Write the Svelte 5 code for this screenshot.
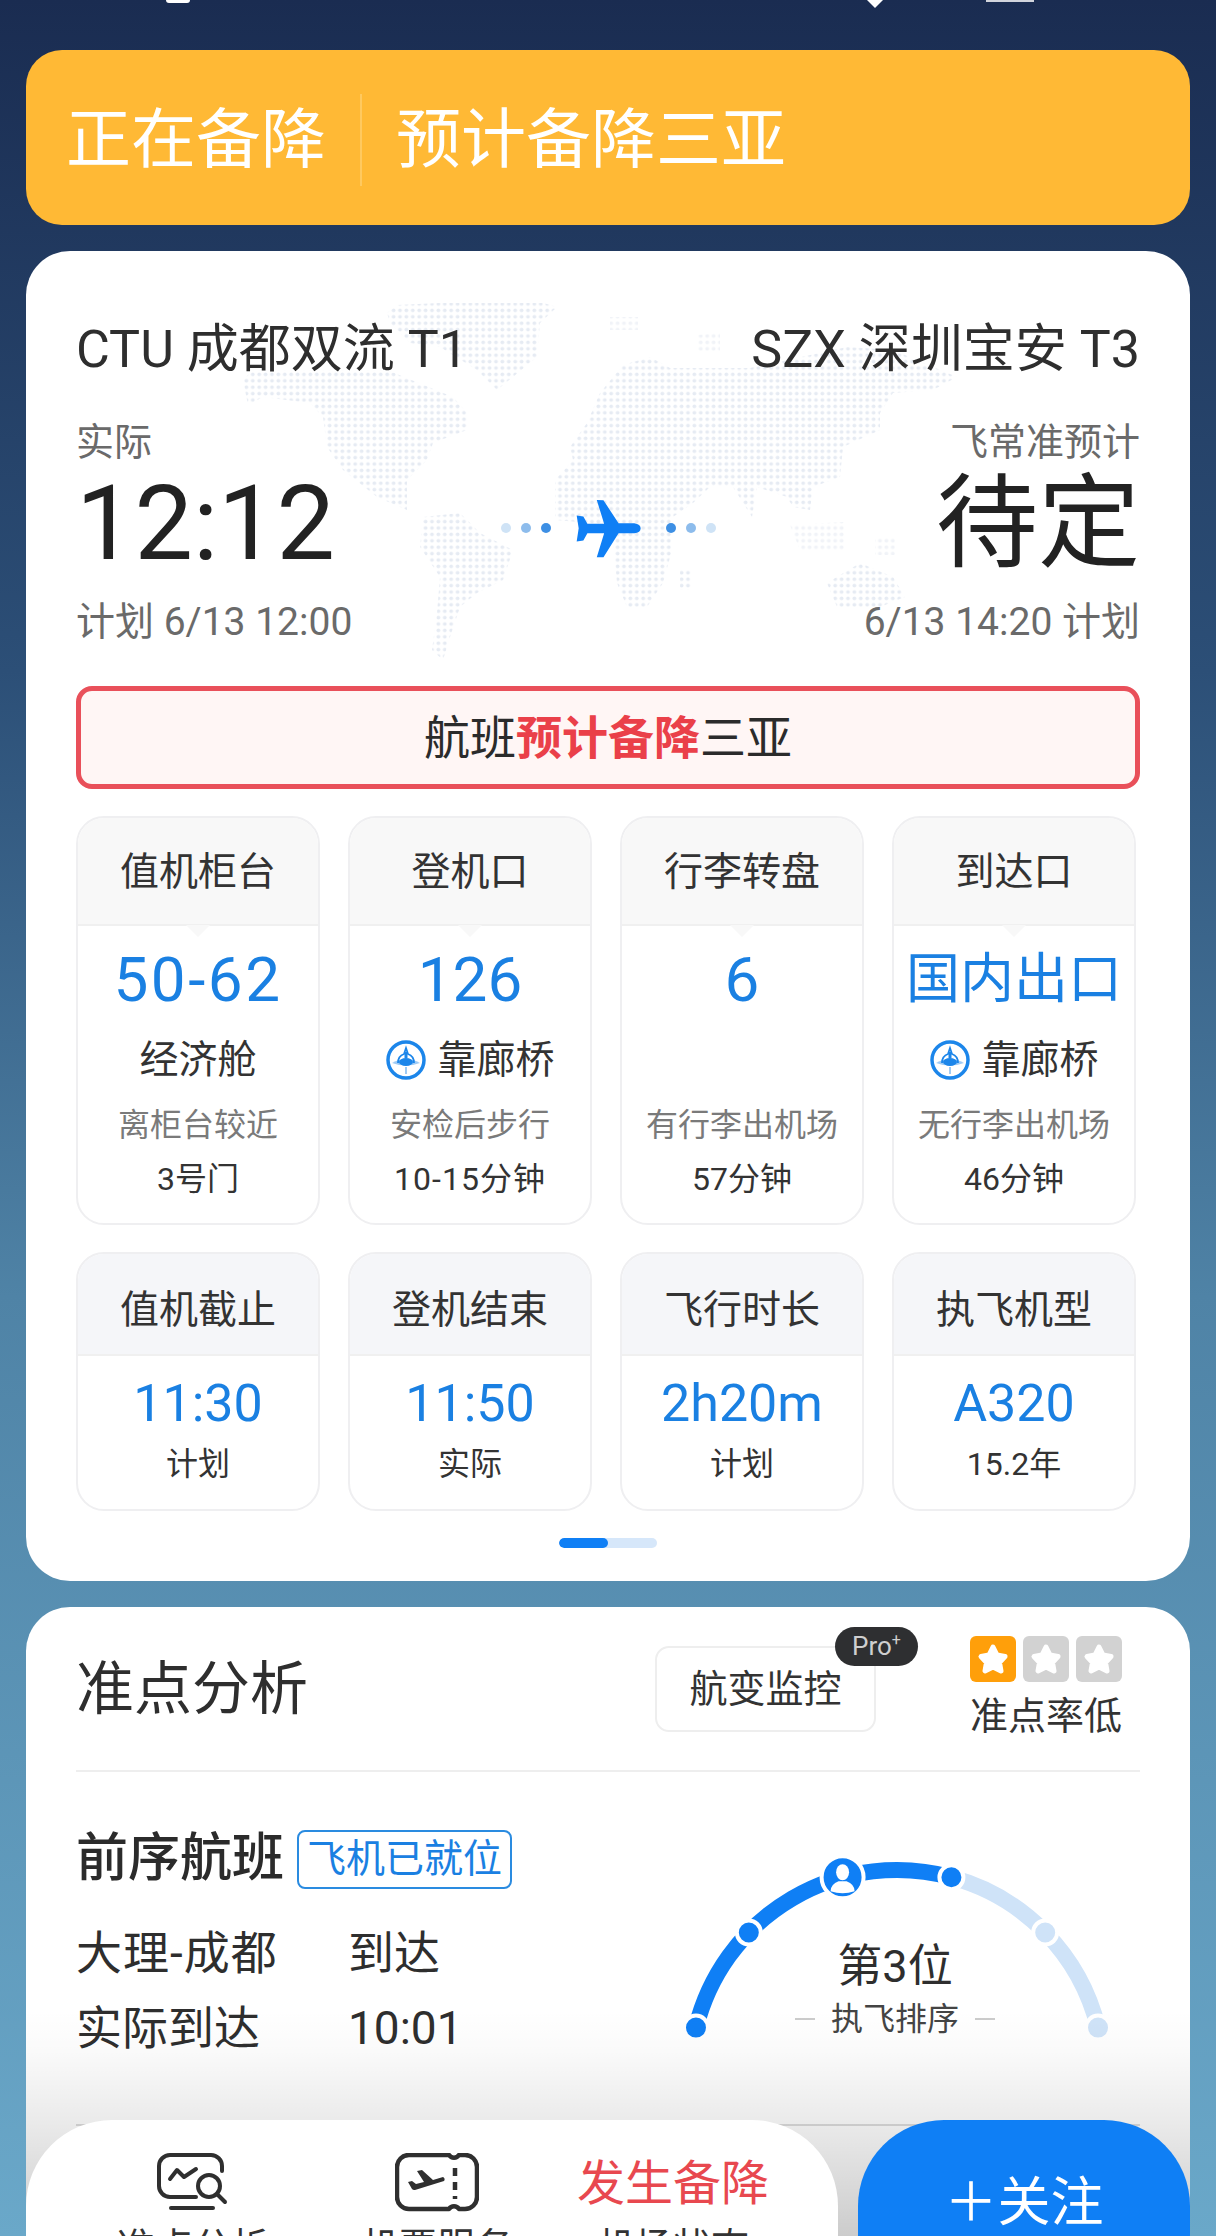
<script>
  const gates = [
    { title: '值机柜台', value: '50-62', wide: true, label: '经济舱', sub: '离柜台较近', note: '3号门' },
    { title: '登机口', value: '126', label: '靠廊桥', bridge: true, sub: '安检后步行', note: '10-15分钟', wideNote: true },
    { title: '行李转盘', value: '6', label: '', sub: '有行李出机场', note: '57分钟' },
    { title: '到达口', value: '国内出口', small: true, label: '靠廊桥', bridge: true, sub: '无行李出机场', note: '46分钟' }
  ];
  const times = [
    { title: '值机截止', value: '11:30', note: '计划' },
    { title: '登机结束', value: '11:50', note: '实际' },
    { title: '飞行时长', value: '2h20m', note: '计划' },
    { title: '执飞机型', value: 'A320', note: '15.2年' }
  ];
  const continents = [
    '243,380 253,370 387,370 453,397 467,413 467,430 433,443 427,460 407,480 407,510 377,497 343,470 327,447 323,417 310,403 263,397 248,405',
    '387,313 397,305 460,302 540,302 557,307 540,323 537,357 497,390 477,370 440,347 410,343 390,323',
    '423,517 460,513 480,533 513,550 503,580 477,593 460,607 450,637 443,660 432,650 437,613 440,577 420,547',
    '600,393 623,365 650,357 670,368 750,368 847,347 893,350 957,377 933,390 893,393 880,413 880,430 843,447 840,477 813,487 810,510 793,507 787,497 757,487 752,517 733,487 710,487 693,503 673,517 672,550 663,583 647,607 627,607 617,583 613,540 590,523 555,520 555,480 573,460 570,447 587,423',
    '680,570 692,570 692,590 680,590',
    '827,583 860,563 893,577 905,597 880,607 837,607'
  ];
  // scattered islands, drawn fainter
  const islands = [
    '610,317 638,317 638,330 610,330',
    '697,335 720,333 720,353 697,353',
    '790,525 845,522 845,550 800,550',
    '875,538 895,538 895,555 875,555'
  ];

  // gauge: six stops, evenly spaced along the arc
  const cx = 220, cy = 227, r = 207;
  const stops = [0, 1, 2, 3, 4, 5].map((i) => {
    const a = ((13.8 + 30.48 * i) * Math.PI) / 180;
    return { x: cx - r * Math.cos(a), y: cy - r * Math.sin(a), i };
  });
  const arc = (a, b) => `M${a.x} ${a.y} A${r} ${r} 0 0 1 ${b.x} ${b.y}`;
</script>

<div class="page">
  <div class="status-bits">
    <span class="bit-round"></span>
    <span class="bit-diamond"></span>
    <span class="bit-rect"></span>
  </div>

  <div class="banner">
    <span class="banner-state">正在备降</span>
    <span class="banner-msg">预计备降三亚</span>
  </div>

  <section class="card flight">
    <svg class="map" viewBox="240 303 730 360" width="730" height="360" aria-hidden="true">
      <defs>
        <pattern id="dots" width="6.4" height="6.4" patternUnits="userSpaceOnUse">
          <circle cx="3.2" cy="3.2" r="1.9" fill="#e6ebf3" />
        </pattern>
      </defs>
      {#each continents as pts}
        <polygon points={pts} fill="url(#dots)" />
      {/each}
      <g opacity="0.55">
        {#each islands as pts}
          <polygon points={pts} fill="url(#dots)" />
        {/each}
      </g>
    </svg>

    <div class="route">
      <span>CTU 成都双流 T1</span>
      <span>SZX 深圳宝安 T3</span>
    </div>

    <div class="schedule">
      <div class="side">
        <div class="kind">实际</div>
        <div class="clock">12:12</div>
        <div class="plan">计划 6/13 12:00</div>
      </div>
      <div class="path">
        <i class="dot d1"></i><i class="dot d2"></i><i class="dot d3"></i>
        <svg class="plane" viewBox="285 80 200 182" width="67" height="61">
          <path fill="#0f7ff5" d="M290 132 L310 135 L322 157 H372 L350 86 L370 87 L415 155 H462 Q481 158 481 170 Q481 183 462 185 H415 L370 257 L350 257 L372 185 H322 L310 207 L290 210 L296 170 Z" />
        </svg>
        <i class="dot d3"></i><i class="dot d2"></i><i class="dot d1"></i>
      </div>
      <div class="side right">
        <div class="kind">飞常准预计</div>
        <div class="clock pending">待定</div>
        <div class="plan">6/13 14:20 计划</div>
      </div>
    </div>

    <div class="alert">航班<b>预计备降</b>三亚</div>

    <div class="tiles first">
      {#each gates as t}
        <div class="tile">
          <div class="tile-head notch">{t.title}</div>
          <div class="value" class:small={t.small} class:wide={t.wide}>{t.value}</div>
          <div class="label">
            {#if t.bridge}
              <svg viewBox="0 0 42 42" width="42" height="42">
                <circle cx="21" cy="21" r="18" fill="#fff" stroke="#1c86ea" stroke-width="3.5" />
                <path d="M7 24 Q21 16 35 24 Q21 29 7 24 Z" fill="#9fcbf5" />
                <path d="M13 24 Q13 17 19 15 L21 9 L23 15 Q29 17 29 24" fill="none" stroke="#1c86ea" stroke-width="1.8" />
                <ellipse cx="21" cy="23" rx="7" ry="4" fill="#1c86ea" />
                <path d="M21 13 V19" stroke="#1c86ea" stroke-width="3" />
                <path d="M21 28 V35" stroke="#9fcbf5" stroke-width="2" />
              </svg>
            {/if}
            {t.label}
          </div>
          <div class="sub">{t.sub}</div>
          <div class="note" class:wide-note={t.wideNote}>{t.note}</div>
        </div>
      {/each}
    </div>

    <div class="tiles second">
      {#each times as t}
        <div class="tile">
          <div class="tile-head cool">{t.title}</div>
          <div class="value thin">{t.value}</div>
          <div class="note tight">{t.note}</div>
        </div>
      {/each}
    </div>

    <div class="pager"><span></span></div>
  </section>

  <section class="card punctual">
    <div class="head">
      <h2>准点分析</h2>
      <div class="monitor">
        航变监控
        <span class="pro">Pro<sup>+</sup></span>
      </div>
      <div class="rating">
        <div class="stars">
          {#each [true, false, false] as on}
            <span class="star" class:on>
              <svg viewBox="0 0 46 46" width="46" height="46">
                <path fill="#fff" stroke="#fff" stroke-width="5" stroke-linejoin="round" d="M23 11 L27 19 L35 20.5 L29.5 26.5 L31 35 L23 31 L15 35 L16.5 26.5 L11 20.5 L19 19 Z" />
              </svg>
            </span>
          {/each}
        </div>
        <div class="rating-text">准点率低</div>
      </div>
    </div>

    <div class="body">
      <div class="prev">
        <div class="prev-title">
          <h3>前序航班</h3>
          <span class="tag">飞机已就位</span>
        </div>
        <div class="row first-row"><span class="wide-row">大理-成都</span><span>到达</span></div>
        <div class="row"><span>实际到达</span><span>10:01</span></div>
      </div>

      <div class="gauge">
        <svg viewBox="0 0 440 200" width="440" height="200">
          <path d={arc(stops[3], stops[5])} fill="none" stroke="#cfe3f8" stroke-width="16" />
          <path d={arc(stops[0], stops[3])} fill="none" stroke="#0f7ff5" stroke-width="16" />
          {#each stops as s}
            {#if s.i === 2}
              <circle cx={s.x} cy={s.y} r="21" fill="#0f7ff5" stroke="#fff" stroke-width="4" />
              <ellipse cx={s.x} cy={s.y - 5} rx="6.5" ry="8" fill="#fff" />
              <path d="M{s.x - 12} {s.y + 14} Q{s.x - 12} {s.y + 7} {s.x - 4} {s.y + 4} H{s.x + 4} Q{s.x + 12} {s.y + 7} {s.x + 12} {s.y + 14} Q{s.x} {s.y + 18} {s.x - 12} {s.y + 14} Z" fill="#fff" />
            {:else}
              <circle cx={s.x} cy={s.y} r="12" fill={s.i <= 3 ? '#0f7ff5' : '#cfe3f8'} stroke="#fff" stroke-width="4" />
            {/if}
          {/each}
        </svg>
        <div class="rank">第3位</div>
        <div class="rank-sub"><i></i>执飞排序<i></i></div>
      </div>
    </div>

    <div class="next-line"></div>
  </section>

  <div class="dock">
    <nav class="tabs">
      <div class="tab">
        <svg viewBox="0 0 72 60" width="72" height="60" fill="none" stroke="#2f2f2f" stroke-width="4" stroke-linecap="round" stroke-linejoin="round">
          <path d="M65 18 V13 a11 11 0 0 0 -11 -11 H13 a11 11 0 0 0 -11 11 V33 a11 11 0 0 0 11 11 H39" />
          <path d="M13 26 L20 17 L27 24 L39 16" />
          <circle cx="52" cy="33" r="11" />
          <path d="M60 41 L68 49" />
          <path d="M14 55 H56" />
        </svg>
        <span>准点分析</span>
      </div>
      <div class="tab middle">
        <svg viewBox="0 0 84 60" width="84" height="60" fill="none" stroke="#2f2f2f" stroke-width="4.5" stroke-linejoin="round">
          <path d="M14 2 H54 a6 6 0 0 0 10 0 H70 a12 12 0 0 1 12 12 V44 a12 12 0 0 1 -12 12 H64 a6 6 0 0 0 -10 0 H14 a12 12 0 0 1 -12 -12 V14 a12 12 0 0 1 12 -12 Z" />
          <path d="M60 15 V46" stroke-dasharray="8 6" />
          <path stroke="none" fill="#2f2f2f" d="M13 29 L17 28 L21 31 L29 29 L22 18 L27 17 L38 27 L48 24 A2.5 2.5 0 0 1 49 28 L20 37 A3 3 0 0 1 17 36 Z" />
        </svg>
        <span>机票服务</span>
      </div>
      <div class="tab alert-tab">
        <strong>发生备降</strong>
        <span>机场状态</span>
      </div>
    </nav>
    <button class="follow">＋关注</button>
  </div>
</div>

<style>
  :global(body) {
    margin: 0;
  }

  .page {
    position: relative;
    box-sizing: border-box;
    width: 1216px;
    height: 2236px;
    overflow: hidden;
    padding: 50px 26px 0;
    background: linear-gradient(180deg, #1a2c51 0%, #2c4f77 30%, #4f83a6 58%, #6aa8c9 100%);
    font-family: Roboto, "Noto Sans CJK SC", sans-serif;
    color: #2b2b2b;
  }

  .status-bits span {
    position: absolute;
    top: 0;
    background: #fff;
  }
  .bit-round {
    left: 166px;
    width: 24px;
    height: 3px;
    border-radius: 0 0 12px 12px;
  }
  .bit-diamond {
    left: 867px;
    width: 16px;
    height: 8px;
    clip-path: polygon(0 0, 100% 0, 50% 100%);
  }
  .bit-rect {
    left: 986px;
    width: 48px;
    height: 2px;
    opacity: 0.8;
  }

  .banner {
    box-sizing: border-box;
    height: 175px;
    display: flex;
    align-items: center;
    padding: 4px 0 0 40px;
    background: #ffb935;
    border-radius: 36px;
    color: #fff;
    font-size: 65px;
    line-height: 80px;
  }
  .banner-state {
    padding-right: 36px;
    position: relative;
  }
  .banner-state::after {
    content: '';
    position: absolute;
    right: 0;
    top: -6px;
    bottom: -6px;
    width: 2px;
    background: #ffc95f;
  }
  .banner-msg {
    padding-left: 34px;
  }

  .card {
    position: relative;
    background: #fff;
    border-radius: 44px;
  }

  .flight {
    box-sizing: border-box;
    height: 1330px;
    margin-top: 26px;
    padding: 69px 50px 0;
  }

  .map {
    position: absolute;
    left: 214px;
    top: 52px;
  }

  .route {
    position: relative;
    display: flex;
    justify-content: space-between;
    font-size: 52px;
    line-height: 60px;
    color: #2e2e2e;
  }

  .schedule {
    position: relative;
    display: grid;
    grid-template-columns: 1fr auto 1fr;
    align-items: center;
    margin-top: 38px;
  }
  .side.right {
    text-align: right;
  }
  .kind {
    font-size: 38px;
    line-height: 48px;
    color: #6a6a6a;
  }
  .clock {
    margin-top: 3px;
    font-size: 104px;
    line-height: 110px;
    color: #222;
  }
  .clock.pending {
    font-size: 102px;
  }
  .plan {
    margin-top: 19px;
    font-size: 39px;
    line-height: 48px;
    color: #6a6a6a;
  }

  .path {
    display: flex;
    align-items: center;
    gap: 10px;
    padding-bottom: 8px;
  }
  .plane {
    margin: 0 14px;
  }
  .dot {
    width: 10px;
    height: 10px;
    border-radius: 50%;
  }
  .d1 { background: #cfe3f6; }
  .d2 { background: #8dbcec; }
  .d3 { background: #3d8fe4; }

  .alert {
    position: relative;
    box-sizing: border-box;
    height: 103px;
    margin-top: 40px;
    border: 5px solid #e9505a;
    border-radius: 16px;
    background: #fff6f5;
    text-align: center;
    font-size: 46px;
    line-height: 95px;
    color: #2b2b2b;
  }
  .alert b {
    color: #ea4049;
    font-weight: 700;
  }

  .tiles {
    display: grid;
    grid-template-columns: repeat(4, 244px);
    gap: 28px;
    margin-top: 27px;
  }
  .tile {
    box-sizing: border-box;
    border: 2px solid #efeff1;
    border-radius: 28px;
    overflow: hidden;
    text-align: center;
    background: #fff;
  }
  .first .tile {
    height: 409px;
  }
  .second .tile {
    height: 259px;
  }
  .tile-head {
    position: relative;
    box-sizing: border-box;
    height: 108px;
    line-height: 108px;
    font-size: 39px;
    background: #f8f8f8;
    border-bottom: 2px solid #f0f0f0;
    color: #333;
  }
  .tile-head.cool {
    height: 102px;
    line-height: 112px;
    background: #f5f6f9;
  }
  .notch::after {
    content: '';
    position: absolute;
    left: 50%;
    bottom: -13px;
    width: 24px;
    height: 12px;
    margin-left: -12px;
    background: #f8f8f8;
    clip-path: polygon(0 0, 100% 0, 50% 100%);
  }

  .value {
    margin-top: 19px;
    font-size: 62px;
    line-height: 70px;
    color: #1a80e2;
  }
  .value.wide {
    letter-spacing: 2.5px;
  }
  .value.small {
    font-size: 54px;
  }
  .value.thin {
    margin-top: 18px;
    font-size: 52px;
    line-height: 60px;
  }
  .label {
    display: flex;
    align-items: center;
    justify-content: center;
    gap: 10px;
    height: 48px;
    margin-top: 21px;
    font-size: 39px;
    line-height: 48px;
    color: #333;
  }
  .sub {
    margin-top: 19px;
    font-size: 32px;
    line-height: 44px;
    color: #7a7a7a;
  }
  .note {
    margin-top: 10px;
    font-size: 32px;
    line-height: 44px;
    color: #333;
  }
  .note.wide-note {
    letter-spacing: 1px;
  }
  .note.tight {
    margin-top: 8px;
  }

  .pager {
    width: 98px;
    height: 10px;
    margin: 27px auto 0;
    border-radius: 5px;
    background: #d6e7fa;
    overflow: hidden;
  }
  .pager span {
    display: block;
    width: 49px;
    height: 100%;
    border-radius: 5px;
    background: #0f7ff5;
  }

  .punctual {
    height: 700px;
    margin-top: 26px;
    padding: 0 50px;
    overflow: hidden;
  }
  .punctual::after {
    content: '';
    position: absolute;
    left: 0;
    right: 0;
    top: 403px;
    height: 226px;
    background: linear-gradient(180deg, rgba(0, 0, 0, 0), rgba(0, 0, 0, 0.02) 18%, rgba(0, 0, 0, 0.08) 48%, rgba(0, 0, 0, 0.2) 100%);
    pointer-events: none;
  }

  .head {
    box-sizing: border-box;
    height: 165px;
    display: flex;
    align-items: flex-start;
    border-bottom: 2px solid #eeeeee;
  }
  h2 {
    flex: 1;
    margin: 47px 0 0;
    font-size: 58px;
    line-height: 70px;
    font-weight: 400;
    color: #2e2e2e;
  }
  .monitor {
    position: relative;
    box-sizing: border-box;
    width: 221px;
    height: 86px;
    margin-top: 39px;
    border: 2px solid #eeeeee;
    border-radius: 14px;
    text-align: center;
    font-size: 38px;
    line-height: 82px;
    color: #333;
  }
  .pro {
    position: absolute;
    left: 178px;
    top: -21px;
    box-sizing: border-box;
    width: 83px;
    height: 39px;
    border-radius: 20px;
    background: #2e2f31;
    color: #cfcfcf;
    font-size: 26px;
    line-height: 38px;
  }
  .pro sup {
    font-size: 16px;
    line-height: 0;
  }
  .rating {
    width: 170px;
    margin: 29px 0 0 94px;
  }
  .stars {
    display: flex;
    gap: 7px;
  }
  .star {
    width: 46px;
    height: 46px;
    border-radius: 6px;
    background: #d2d2d2;
  }
  .star.on {
    background: #ff9f0a;
  }
  .star svg {
    display: block;
  }
  .rating-text {
    margin-top: 12px;
    font-size: 38px;
    line-height: 44px;
    color: #333;
  }

  .body {
    display: flex;
    height: 352px;
  }
  .prev {
    width: 601px;
    padding-top: 57px;
  }
  .prev-title {
    display: flex;
    align-items: center;
    height: 60px;
  }
  h3 {
    margin: 0;
    font-size: 52px;
    line-height: 60px;
    font-weight: 500;
    color: #2b2b2b;
  }
  .tag {
    box-sizing: border-box;
    height: 59px;
    margin-left: 13px;
    padding: 0 8px;
    border: 2px solid #2a8be0;
    border-radius: 8px;
    font-size: 39px;
    line-height: 55px;
    color: #1a80e2;
  }
  .row {
    display: flex;
    margin-top: 19px;
    font-size: 46px;
    line-height: 56px;
    color: #2e2e2e;
  }
  .row.first-row {
    margin-top: 36px;
  }
  .row span:first-child {
    width: 272px;
  }
  .row .wide-row {
    letter-spacing: 1px;
  }

  .gauge {
    position: relative;
    width: 440px;
    height: 200px;
    margin-top: 78px;
  }
  .gauge svg {
    display: block;
  }
  .rank,
  .rank-sub {
    position: absolute;
    left: 0;
    right: 4px;
    text-align: center;
    color: #2e2e2e;
  }
  .rank {
    top: 89px;
    font-size: 45px;
    line-height: 56px;
  }
  .rank-sub {
    top: 147px;
    display: flex;
    align-items: center;
    justify-content: center;
    gap: 16px;
    font-size: 32px;
    line-height: 44px;
    color: #444;
  }
  .rank-sub i {
    width: 20px;
    height: 2px;
    background: #cccccc;
  }

  .next-line {
    height: 2px;
    background: #dddddd;
  }

  .dock {
    position: absolute;
    left: 26px;
    right: 26px;
    top: 2120px;
    display: flex;
    gap: 20px;
  }
  .tabs {
    box-sizing: border-box;
    width: 812px;
    height: 200px;
    display: flex;
    padding: 33px 0 0 48px;
    background: #fff;
    border-radius: 86px;
  }
  .tab {
    width: 238px;
    display: flex;
    flex-direction: column;
    align-items: center;
    font-size: 38px;
    line-height: 50px;
    color: #333;
  }
  .tab.middle {
    width: 246px;
    padding-left: 4px;
    box-sizing: border-box;
  }
  .tab svg {
    display: block;
    height: 60px;
    margin-bottom: 9px;
  }
  .alert-tab {
    margin-left: -4px;
  }
  .alert-tab strong {
    height: 69px;
    font-size: 48px;
    line-height: 62px;
    font-weight: 400;
    color: #e8484f;
  }
  .follow {
    width: 332px;
    height: 200px;
    padding: 0 0 44px;
    border: 0;
    border-radius: 86px;
    background: #0f7ff5;
    color: #fff;
    font-family: inherit;
    font-size: 53px;
  }
</style>
